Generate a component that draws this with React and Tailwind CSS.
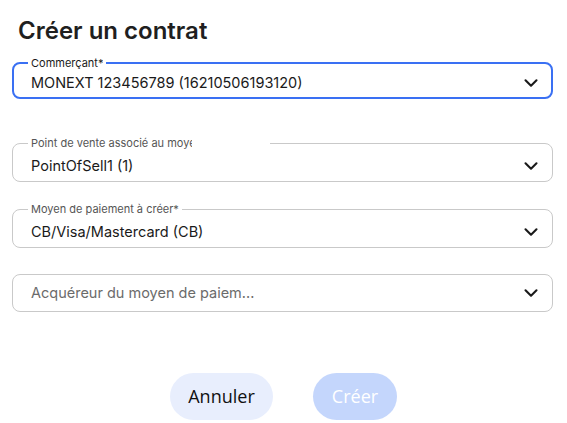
import React, { useState } from 'react';
import { ChevronDown } from 'lucide-react';

const font = { fontFamily: 'Inter, "Liberation Sans", sans-serif' };

function Field({ label, value, focused, legendWidth, labelMax }) {
    return (
        <fieldset
            className={`relative m-0 min-w-0 rounded-[8px] pl-[14px] pr-[10px] ${focused ? 'border-2 border-[#3a70f3]' : 'border border-[#c9c9c9]'}`}
        >
            {label && (
                <legend
                    className={`px-[3px] text-[11px] leading-[12px] ${focused ? 'ml-0 text-[#1a1a1a]' : 'ml-[1px] text-[#555]'}`}
                    style={legendWidth ? { width: legendWidth } : undefined}
                >
                    <span
                        className="block overflow-hidden whitespace-nowrap"
                        style={labelMax ? { maxWidth: labelMax } : undefined}
                    >
                        {label}
                    </span>
                </legend>
            )}
            <div className={`flex items-center justify-between ${focused ? 'h-[28px] -mr-[1px] pl-[3px] pb-[1px]' : 'h-[32px] pl-[4px] pt-[1px]'}`}>
                <span className="text-[14.5px] text-[#1a1a1a]">{value}</span>
                <ChevronDown size={22} strokeWidth={2.3} className="text-[#1a1a1a]" />
            </div>
        </fieldset>
    );
}

export default function App() {
    const [merchant] = useState('MONEXT 123456789 (16210506193120)');

    return (
        <div className="h-[423px] w-[567px] bg-white pl-[12px] pr-[14px]" style={font}>
            <h1 className="pl-[6px] pt-[16px] text-[24px] font-semibold leading-[30px] text-[#1f1f1f]">
                Créer un contrat
            </h1>

            <div className="mt-[11px] flex flex-col">
                <Field label="Commerçant*" value={merchant} focused />

                <div className="mt-[38px]">
                    <Field
                        label="Point de vente associé au moyen de paiement"
                        value="PointOfSell1 (1)"
                        legendWidth="242px"
                        labelMax="161px"
                    />
                </div>

                <div className="mt-[21px]">
                    <Field label="Moyen de paiement à créer*" value="CB/Visa/Mastercard (CB)" />
                </div>

                <div className="mt-[26px] flex h-[38px] items-center justify-between rounded-[8px] border border-[#c9c9c9] pl-[18px] pr-[10px]">
                    <span className="text-[14.5px] text-[#6b6b6b]">Acquéreur du moyen de paiem...</span>
                    <ChevronDown size={22} strokeWidth={2.3} className="text-[#1a1a1a]" />
                </div>
            </div>

            <div className="mt-[61px] flex justify-center gap-[40px] pl-[2px]" style={{ fontFamily: '"Open Sans", "Noto Sans", sans-serif' }}>
                <button className="h-[47px] w-[103px] rounded-full bg-[#e8eefd] text-[18px] text-[#111]">
                    Annuler
                </button>
                <button disabled className="h-[47px] w-[84px] rounded-full bg-[#c4d6fc] text-[18px] text-white">
                    Créer
                </button>
            </div>
        </div>
    );
}
